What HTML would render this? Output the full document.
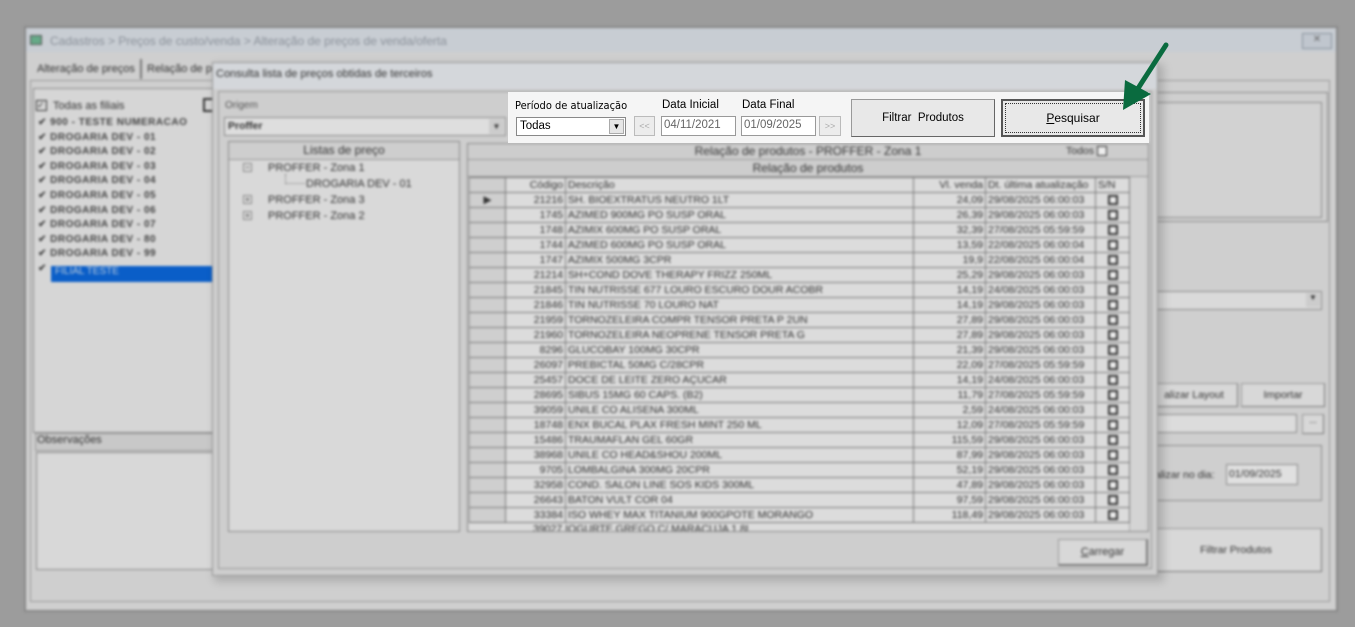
<!DOCTYPE html>
<html><head><meta charset="utf-8"><style>
*{box-sizing:border-box;margin:0;padding:0}
body{width:1355px;height:627px;overflow:hidden;background:#9c9c9c;font-family:"Liberation Sans",sans-serif;font-size:11px;color:#333;position:relative}
.a{position:absolute}
.blur{position:absolute;left:0;top:0;width:1355px;height:627px;filter:blur(1.3px)}
.bx{position:absolute;border:1px solid #8a8a8a}
.btn{position:absolute;background:#d8d8d8;border:1px solid #999;border-right-color:#777;border-bottom-color:#777;text-align:center}
table{border-collapse:collapse;position:absolute;left:469px;top:177px;width:660px;table-layout:fixed}
td{height:15px;border:1px solid #7a7a7a;border-left-color:#999;padding:0 2px;font-size:10.5px;white-space:nowrap;overflow:hidden;line-height:13px;background:#dcdcdc}
td.i{background:#cfcfcf}
td.r{text-align:right}
.cb{display:inline-block;width:10px;height:10px;border:2px solid #333;background:#eee;vertical-align:middle}
</style></head><body>
<div class="blur">
<div class="a" style="left:24px;top:26px;width:1314px;height:586px;background:#cfcfcf;border:2px solid #888"></div>
<div class="a" style="left:26px;top:28px;width:1310px;height:24px;background:#c8cdd3"></div>
<div class="a" style="left:30px;top:35px;width:12px;height:10px;background:#6a8;border:1px solid #555"></div>
<div class="a" style="left:50px;top:34px;font-size:12px;color:#8a9099">Cadastros &gt; Preços de custo/venda &gt; Alteração de preços de venda/oferta</div>
<div class="a" style="left:1302px;top:33px;width:30px;height:16px;background:#c0c6ce;border:1px solid #8a929c;text-align:center;font-size:10px;color:#666">✕</div>
<div class="a" style="left:37px;top:63px;font-size:11px">Alteração de preços</div>
<div class="a" style="left:140px;top:59px;width:2px;height:20px;background:#777"></div>
<div class="a" style="left:147px;top:63px;font-size:11px">Relação de p</div>
<div class="a" style="left:30px;top:80px;width:1300px;height:522px;border:1px solid #999"></div>
<div class="bx" style="left:33px;top:88px;width:180px;height:345px;background:#d6d6d6"></div>
<div class="a" style="left:36px;top:100px;width:11px;height:11px;border:1px solid #333;font-size:9px;line-height:9px">✓</div>
<div class="a" style="left:53px;top:100px">Todas as filiais</div>
<div class="a" style="left:203px;top:98px;width:10px;height:14px;border:2px solid #333;border-right:none"></div>
<div class="a" style="left:38px;top:116px;line-height:14.6px;font-size:10px;color:#444;letter-spacing:0.5px;font-weight:bold">
✔ 900 - TESTE NUMERACAO<br>✔ DROGARIA DEV - 01<br>✔ DROGARIA DEV - 02<br>✔ DROGARIA DEV - 03<br>✔ DROGARIA DEV - 04<br>✔ DROGARIA DEV - 05<br>✔ DROGARIA DEV - 06<br>✔ DROGARIA DEV - 07<br>✔ DROGARIA DEV - 80<br>✔ DROGARIA DEV - 99<br>✔</div>
<div class="a" style="left:51px;top:266px;width:161px;height:16px;background:#0a5ec8;color:#bcd;font-size:10px;padding-left:4px">FILIAL TESTE</div>
<div class="a" style="left:35px;top:433px;width:178px;height:18px;background:#c8c8c8;border:1px solid #999;padding-left:1px">Observações</div>
<div class="bx" style="left:36px;top:452px;width:177px;height:118px;background:#d8d8d8"></div>
<div class="bx" style="left:1150px;top:92px;width:178px;height:130px"></div>
<div class="bx" style="left:1150px;top:102px;width:172px;height:116px;background:#d2d2d2"></div>
<div class="bx" style="left:1150px;top:291px;width:172px;height:19px;background:#dadada"></div>
<div class="a" style="left:1306px;top:293px;width:14px;height:14px;background:#ccc;font-size:8px;text-align:center">▼</div>
<div class="btn" style="left:1150px;top:383px;width:88px;height:24px;line-height:22px;font-size:10.5px">alizar Layout</div>
<div class="btn" style="left:1241px;top:383px;width:84px;height:24px;line-height:22px;font-size:10.5px">Importar</div>
<div class="bx" style="left:1150px;top:414px;width:147px;height:19px;background:#dcdcdc"></div>
<div class="btn" style="left:1302px;top:414px;width:22px;height:20px;font-size:9px">...</div>
<div class="bx" style="left:1150px;top:445px;width:172px;height:56px"></div>
<div class="a" style="left:1155px;top:469px;font-size:10.5px">alizar no dia:</div>
<div class="bx" style="left:1226px;top:464px;width:72px;height:21px;background:#e0e0e0;padding:3px 2px;font-size:10.5px">01/09/2025</div>
<div class="btn" style="left:1150px;top:528px;width:172px;height:44px;line-height:42px;font-size:10.5px">Filtrar Produtos</div>
<div class="a" style="left:214px;top:64px;width:950px;height:518px;background:rgba(0,0,0,0.15);filter:blur(4px)"></div>
<div class="a" style="left:212px;top:62px;width:946px;height:514px;background:#cecece;border:1px solid #999"></div>
<div class="a" style="left:213px;top:63px;width:944px;height:26px;background:#d4d7db"></div>
<div class="a" style="left:216px;top:68px;font-size:11px;color:#333">Consulta lista de preços obtidas de terceiros</div>
<div class="a" style="left:218px;top:91px;width:934px;height:478px;border:1px solid #999"></div>
<div class="a" style="left:225px;top:100px;font-size:10px;color:#555">Origem</div>
<div class="bx" style="left:224px;top:117px;width:282px;height:19px;background:#dedede;font-weight:bold;font-size:10.5px;padding:2px 3px">Proffer</div>
<div class="a" style="left:489px;top:119px;width:15px;height:15px;background:#ccc;font-size:8px;text-align:center;line-height:15px">▼</div>
<div class="bx" style="left:228px;top:141px;width:232px;height:391px;background:#d9d9d9"></div>
<div class="a" style="left:229px;top:142px;width:230px;height:18px;background:#cecece;border-bottom:1px solid #999;text-align:center;font-size:12px;line-height:17px">Listas de preço</div>
<div class="a" style="left:243px;top:163px;width:9px;height:9px;border:1px solid #888;font-size:8px;line-height:7px;text-align:center">−</div>
<div class="a" style="left:268px;top:162px;font-size:11px">PROFFER - Zona 1</div>
<div class="a" style="left:285px;top:174px;width:20px;height:10px;border-left:1px dotted #777;border-bottom:1px dotted #777"></div>
<div class="a" style="left:306px;top:178px;font-size:11px">DROGARIA DEV - 01</div>
<div class="a" style="left:243px;top:195px;width:9px;height:9px;border:1px solid #888;font-size:8px;line-height:7px;text-align:center">+</div>
<div class="a" style="left:268px;top:194px;font-size:11px">PROFFER - Zona 3</div>
<div class="a" style="left:243px;top:211px;width:9px;height:9px;border:1px solid #888;font-size:8px;line-height:7px;text-align:center">+</div>
<div class="a" style="left:268px;top:210px;font-size:11px">PROFFER - Zona 2</div>
<div class="bx" style="left:467px;top:143px;width:682px;height:389px;background:#d0d0d0"></div>
<div class="a" style="left:468px;top:144px;width:680px;height:16px;background:#cdcdcd;border-bottom:1px solid #999;text-align:center;font-size:12px;line-height:15px">Relação de produtos - PROFFER - Zona 1</div>
<div class="a" style="left:1066px;top:145px;font-size:10.5px">Todos <span class="cb" style="border-width:1.5px"></span></div>
<div class="a" style="left:468px;top:160px;width:680px;height:17px;background:#cdcdcd;border-bottom:1px solid #999;text-align:center;font-size:12px;line-height:16px">Relação de produtos</div>
<div class="a" style="left:1129px;top:177px;width:16px;height:354px;background:#d4d4d4;border-left:1px solid #aaa"></div>
<table>
<colgroup><col style="width:36px"><col style="width:60px"><col style="width:348px"><col style="width:72px"><col style="width:110px"><col style="width:34px"></colgroup>
<tr><td class="i"></td><td class="r">Código</td><td>Descrição</td><td class="r">Vl. venda</td><td>Dt. última atualização</td><td>S/N</td></tr>
<tr><td class="i" style="text-align:center">▶</td><td class="r">21216</td><td>SH. BIOEXTRATUS NEUTRO 1LT</td><td class="r">24,09</td><td>29/08/2025 06:00:03</td><td style="text-align:center"><span class="cb"></span></td></tr>
<tr><td class="i"></td><td class="r">1745</td><td>AZIMED 900MG PO SUSP ORAL</td><td class="r">26,39</td><td>29/08/2025 06:00:03</td><td style="text-align:center"><span class="cb"></span></td></tr>
<tr><td class="i"></td><td class="r">1748</td><td>AZIMIX 600MG PO SUSP ORAL</td><td class="r">32,39</td><td>27/08/2025 05:59:59</td><td style="text-align:center"><span class="cb"></span></td></tr>
<tr><td class="i"></td><td class="r">1744</td><td>AZIMED 600MG PO SUSP ORAL</td><td class="r">13,59</td><td>22/08/2025 06:00:04</td><td style="text-align:center"><span class="cb"></span></td></tr>
<tr><td class="i"></td><td class="r">1747</td><td>AZIMIX 500MG 3CPR</td><td class="r">19,9</td><td>22/08/2025 06:00:04</td><td style="text-align:center"><span class="cb"></span></td></tr>
<tr><td class="i"></td><td class="r">21214</td><td>SH+COND DOVE THERAPY FRIZZ 250ML</td><td class="r">25,29</td><td>29/08/2025 06:00:03</td><td style="text-align:center"><span class="cb"></span></td></tr>
<tr><td class="i"></td><td class="r">21845</td><td>TIN NUTRISSE 677 LOURO ESCURO DOUR ACOBR</td><td class="r">14,19</td><td>24/08/2025 06:00:03</td><td style="text-align:center"><span class="cb"></span></td></tr>
<tr><td class="i"></td><td class="r">21846</td><td>TIN NUTRISSE 70 LOURO NAT</td><td class="r">14,19</td><td>29/08/2025 06:00:03</td><td style="text-align:center"><span class="cb"></span></td></tr>
<tr><td class="i"></td><td class="r">21959</td><td>TORNOZELEIRA COMPR TENSOR PRETA P 2UN</td><td class="r">27,89</td><td>29/08/2025 06:00:03</td><td style="text-align:center"><span class="cb"></span></td></tr>
<tr><td class="i"></td><td class="r">21960</td><td>TORNOZELEIRA NEOPRENE TENSOR PRETA G</td><td class="r">27,89</td><td>29/08/2025 06:00:03</td><td style="text-align:center"><span class="cb"></span></td></tr>
<tr><td class="i"></td><td class="r">8296</td><td>GLUCOBAY 100MG 30CPR</td><td class="r">21,39</td><td>29/08/2025 06:00:03</td><td style="text-align:center"><span class="cb"></span></td></tr>
<tr><td class="i"></td><td class="r">26097</td><td>PREBICTAL 50MG C/28CPR</td><td class="r">22,09</td><td>27/08/2025 05:59:59</td><td style="text-align:center"><span class="cb"></span></td></tr>
<tr><td class="i"></td><td class="r">25457</td><td>DOCE DE LEITE ZERO AÇUCAR</td><td class="r">14,19</td><td>24/08/2025 06:00:03</td><td style="text-align:center"><span class="cb"></span></td></tr>
<tr><td class="i"></td><td class="r">28695</td><td>SIBUS 15MG 60 CAPS. (B2)</td><td class="r">11,79</td><td>27/08/2025 05:59:59</td><td style="text-align:center"><span class="cb"></span></td></tr>
<tr><td class="i"></td><td class="r">39059</td><td>UNILE CO ALISENA 300ML</td><td class="r">2,59</td><td>24/08/2025 06:00:03</td><td style="text-align:center"><span class="cb"></span></td></tr>
<tr><td class="i"></td><td class="r">18748</td><td>ENX BUCAL PLAX FRESH MINT 250 ML</td><td class="r">12,09</td><td>27/08/2025 05:59:59</td><td style="text-align:center"><span class="cb"></span></td></tr>
<tr><td class="i"></td><td class="r">15486</td><td>TRAUMAFLAN GEL 60GR</td><td class="r">115,59</td><td>29/08/2025 06:00:03</td><td style="text-align:center"><span class="cb"></span></td></tr>
<tr><td class="i"></td><td class="r">38968</td><td>UNILE CO HEAD&amp;SHOU 200ML</td><td class="r">87,99</td><td>29/08/2025 06:00:03</td><td style="text-align:center"><span class="cb"></span></td></tr>
<tr><td class="i"></td><td class="r">9705</td><td>LOMBALGINA 300MG 20CPR</td><td class="r">52,19</td><td>29/08/2025 06:00:03</td><td style="text-align:center"><span class="cb"></span></td></tr>
<tr><td class="i"></td><td class="r">32958</td><td>COND. SALON LINE SOS KIDS 300ML</td><td class="r">47,89</td><td>29/08/2025 06:00:03</td><td style="text-align:center"><span class="cb"></span></td></tr>
<tr><td class="i"></td><td class="r">26643</td><td>BATON VULT COR 04</td><td class="r">97,59</td><td>29/08/2025 06:00:03</td><td style="text-align:center"><span class="cb"></span></td></tr>
<tr><td class="i"></td><td class="r">33384</td><td>ISO WHEY MAX TITANIUM 900GPOTE MORANGO</td><td class="r">118,49</td><td>29/08/2025 06:00:03</td><td style="text-align:center"><span class="cb"></span></td></tr>
</table>
<div class="a" style="left:469px;top:522px;width:660px;height:9px;overflow:hidden;background:#dcdcdc;border-top:1px solid #777;font-size:10.5px;line-height:12px"><span style="margin-left:64px">39027 IOGURTE GREGO C/ MARACUJA 1,8L</span></div>
<div class="btn" style="left:1058px;top:539px;width:90px;height:27px;line-height:25px;font-size:11px;border-width:1px 2px 2px 1px"><u>C</u>arregar</div>
</div>
<div class="a" style="left:508px;top:92px;width:641px;height:51px;background:#f5f5f5"></div>
<div class="a" style="left:515px;top:99px;color:#000;font-family:'DejaVu Sans Condensed','Liberation Sans',sans-serif;font-size:11px">Período de atualização</div>
<div class="a" style="left:516px;top:117px;width:110px;height:19px;background:#fff;border:1px solid #888;font-size:11.5px;padding:2px 3px;color:#000">Todas</div>
<div class="a" style="left:609px;top:119px;width:15px;height:15px;background:#e6e6e6;border:1px solid #aaa;font-size:8px;text-align:center;line-height:13px;color:#000">▼</div>
<div class="a" style="left:634px;top:116px;width:21px;height:20px;background:#ececec;border:1px solid #bbb;font-size:9px;text-align:center;line-height:18px;color:#aaa">&lt;&lt;</div>
<div class="a" style="left:662px;top:99px;font-size:11.5px;color:#000">Data Inicial</div>
<div class="a" style="left:661px;top:116px;width:75px;height:20px;background:#fff;border:1px solid #999;font-size:11.5px;padding:2px 2px;color:#666">04/11/2021</div>
<div class="a" style="left:742px;top:99px;font-size:11.5px;color:#000">Data Final</div>
<div class="a" style="left:741px;top:116px;width:75px;height:20px;background:#fff;border:1px solid #999;font-size:11.5px;padding:2px 2px;color:#666">01/09/2025</div>
<div class="a" style="left:819px;top:116px;width:22px;height:20px;background:#ececec;border:1px solid #bbb;font-size:9px;text-align:center;line-height:18px;color:#aaa">&gt;&gt;</div>
<div class="a" style="left:851px;top:99px;width:144px;height:38px;background:#e8e8e8;border:1px solid #999;border-right-color:#666;border-bottom-color:#666;text-align:center;line-height:36px;font-size:11.5px;color:#000">Filtrar&nbsp; Produtos</div>
<div class="a" style="left:1001px;top:99px;width:144px;height:38px;background:#e8e8e8;border:2px solid #555;text-align:center;font-size:12px;color:#000"><div style="margin:2px;border:1px dotted #333;height:30px;line-height:28px"><u>P</u>esquisar</div></div>
<svg class="a" style="left:1115px;top:40px" width="60" height="80" viewBox="0 0 60 80">
<line x1="51" y1="5" x2="22" y2="50" stroke="#0a6b3f" stroke-width="5" stroke-linecap="round"/>
<polygon points="8,70 10,40 36,54" fill="#0a6b3f"/>
</svg>
</body></html>
